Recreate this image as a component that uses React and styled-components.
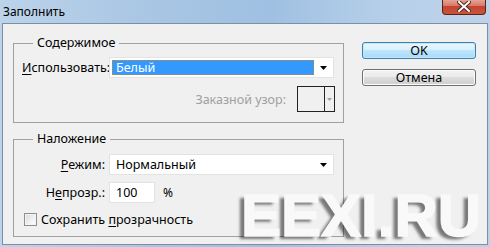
import styled, { createGlobalStyle } from "styled-components";

const Global = createGlobalStyle`
  html, body {
    margin: 0;
    padding: 0;
    background: #b9d0e8;
  }
  body {
    font-family: "Noto Sans", "Liberation Sans", sans-serif;
    font-size: 12px;
    color: #000;
  }
`;

const Window = styled.div`
  position: relative;
  width: 490px;
  height: 247px;
  box-sizing: border-box;
  padding: 0 2px 2px 2px;
  display: flex;
  flex-direction: column;
  overflow: hidden;
  background: linear-gradient(90deg, #bcd3ea 0%, #a9c6e4 30%, #9fc0e2 55%, #b7d0ea 80%, #bdd2e8 100%);
`;

const TitleBar = styled.div`
  height: 23px;
  display: flex;
  align-items: flex-start;
  justify-content: space-between;
`;

const Title = styled.div`
  padding: 4px 0 0 1px;
  font-family: "Noto Sans", sans-serif;
  font-size: 12px;
  line-height: 16px;
  color: #000;
`;

const CloseButton = styled.div`
  width: 44px;
  height: 16px;
  margin: -1px 2px 0 0;
  box-sizing: border-box;
  border: 1px solid #5e2016;
  border-top: none;
  border-radius: 0 0 4px 4px;
  background: linear-gradient(180deg, #e6a99b 0%, #d87a66 45%, #c24530 50%, #c9543c 100%);
  display: flex;
  align-items: center;
  justify-content: center;
`;

const Client = styled.div`
  flex: 1;
  border: 1px solid #7d8fa3;
  background: #f0f0f0;
  display: flex;
  padding: 0 0 0 10px;
`;

const LeftColumn = styled.div`
  width: 331px;
  display: flex;
  flex-direction: column;
  padding-top: 19px;
`;

const GroupBox = styled.div`
  border: 1px solid #a0a0a0;
  margin-top: ${(p) => p.$gap || 0}px;
  padding: 0 8px ${(p) => p.$bottom || 0}px 8px;
  display: flex;
  flex-direction: column;
`;

const GroupTitle = styled.div`
  margin: -9px 0 0 11px;
  padding: 0 4px;
  width: fit-content;
  background: #f0f0f0;
  line-height: 16px;
  font-size: 12.5px;
`;

const FormGrid = styled.div`
  display: grid;
  grid-template-columns: 83px 225px;
  column-gap: 4px;
  row-gap: 7px;
  align-items: center;
  margin-top: ${(p) => p.$top || 0}px;
`;

const Label = styled.label`
  text-align: ${(p) => p.$align || "right"};
  white-space: nowrap;
  color: ${(p) => (p.$disabled ? "#a0a0a0" : "#000")};
  font-size: 12.5px;
`;

const Hot = styled.span`
  text-decoration: underline;
  text-underline-offset: 2px;
`;

const Combo = styled.div`
  height: 21px;
  box-sizing: border-box;
  border: 1px solid #e3e3e3;
  background: #fff;
  display: flex;
  align-items: center;
  padding: 2px 0 2px 2px;
`;

const ComboValue = styled.div`
  flex: 1;
  height: 100%;
  box-sizing: border-box;
  display: flex;
  align-items: center;
  padding-left: 4px;
  font-size: 12.5px;
  ${(p) =>
    p.$selected
      ? `
    background: #3399ff;
    color: #fff;
    outline: 1px dotted #c98a2a;
    outline-offset: -1px;
  `
      : `color: #000;`}
`;

const ArrowBox = styled.div`
  width: 19px;
  display: flex;
  align-items: center;
  justify-content: center;
`;

const PatternRow = styled.div`
  display: flex;
  justify-content: flex-end;
  align-items: center;
  gap: 11px;
  margin-top: 8px;
`;

const PatternBox = styled.div`
  width: 38px;
  height: 26px;
  box-sizing: border-box;
  border: 1px solid #222;
  display: flex;
  background: #f0f0f0;
`;

const PatternPreview = styled.div`
  width: 26px;
  border-right: 1px solid #222;
`;

const PatternArrow = styled.div`
  flex: 1;
  display: flex;
  align-items: center;
  justify-content: center;
`;

const InputRow = styled.div`
  display: flex;
  align-items: center;
  gap: 8px;
`;

const NumberInput = styled.div`
  width: 46px;
  height: 21px;
  box-sizing: border-box;
  border: 1px solid #e3e3e3;
  background: #fff;
  display: flex;
  align-items: center;
  padding-left: 6px;
  font-size: 12.5px;
`;

const CheckRow = styled.div`
  display: flex;
  align-items: center;
  gap: 4px;
  margin-top: 8px;
  padding-left: 2px;
  height: 16px;
`;

const CheckBox = styled.div`
  width: 13px;
  height: 13px;
  box-sizing: border-box;
  border: 1px solid #8e8f8f;
  background: linear-gradient(135deg, #d8d8d8 0%, #f2f2f2 60%, #ffffff 100%);
  box-shadow: inset 0 0 0 1px #f4f4f4;
`;

const RightColumn = styled.div`
  display: flex;
  flex-direction: column;
  gap: 10px;
  margin-left: 18px;
  padding-top: 18px;
`;

const Button = styled.div`
  width: 114px;
  height: 17px;
  box-sizing: border-box;
  border-radius: 3px;
  display: flex;
  align-items: center;
  justify-content: center;
  font-size: 12.5px;
  border: 1px solid ${(p) => (p.$primary ? "#3c7fb1" : "#707070")};
  background: ${(p) =>
    p.$primary
      ? "linear-gradient(180deg, #eaf6fd 0%, #d9f0fc 45%, #bee6fd 50%, #a7d9f5 100%)"
      : "linear-gradient(180deg, #f2f2f2 0%, #ebebeb 45%, #dddddd 50%, #cfcfcf 100%)"};
  box-shadow: inset 0 0 0 1px ${(p) => (p.$primary ? "#c4e6f8" : "#fcfcfc")};
`;

const Watermark = styled.div`
  position: absolute;
  left: 241px;
  top: 192px;
  font-family: "Liberation Sans", Arial, sans-serif;
  font-weight: bold;
  font-size: 60px;
  line-height: 48px;
  color: #f9f9f9;
  -webkit-text-stroke: 1.5px #f9f9f9;
  text-shadow: -5px 3px 3px rgba(0, 0, 0, 0.5);
  pointer-events: none;
  white-space: nowrap;
`;

const Triangle = ({ color = "#000" }) => (
  <svg width="7" height="4" viewBox="0 0 7 4">
    <path d="M0 0 H7 L3.5 4 Z" fill={color} />
  </svg>
);

export default function App() {
  return (
    <>
      <Global />
      <Window>
        <TitleBar>
          <Title>Заполнить</Title>
          <CloseButton>
            <svg width="14" height="11" viewBox="0 0 14 11">
              <path
                d="M2 1 L12 10 M12 1 L2 10"
                stroke="#4a2a26"
                strokeWidth="4"
                strokeLinecap="square"
              />
              <path
                d="M2 1 L12 10 M12 1 L2 10"
                stroke="#ffffff"
                strokeWidth="2"
                strokeLinecap="square"
              />
            </svg>
          </CloseButton>
        </TitleBar>
        <Client>
          <LeftColumn>
            <GroupBox $bottom={10}>
              <GroupTitle>Содержимое</GroupTitle>
              <FormGrid $top={6}>
                <Label $align="left">
                  <Hot>И</Hot>спользовать:
                </Label>
                <Combo>
                  <ComboValue $selected>Белый</ComboValue>
                  <ArrowBox>
                    <Triangle />
                  </ArrowBox>
                </Combo>
              </FormGrid>
              <PatternRow>
                <Label $disabled>Заказной узор:</Label>
                <PatternBox>
                  <PatternPreview />
                  <PatternArrow>
                    <svg width="5" height="3" viewBox="0 0 5 3">
                      <path d="M0 0 H5 L2.5 3 Z" fill="#a0a0a0" />
                    </svg>
                  </PatternArrow>
                </PatternBox>
              </PatternRow>
            </GroupBox>
            <GroupBox $gap={16} $bottom={9}>
              <GroupTitle>Наложение</GroupTitle>
              <FormGrid $top={7}>
                <Label>
                  <Hot>Р</Hot>ежим:
                </Label>
                <Combo>
                  <ComboValue>Нормальный</ComboValue>
                  <ArrowBox>
                    <Triangle />
                  </ArrowBox>
                </Combo>
                <Label>
                  Н<Hot>е</Hot>прозр.:
                </Label>
                <InputRow>
                  <NumberInput>100</NumberInput>
                  <span>%</span>
                </InputRow>
              </FormGrid>
              <CheckRow>
                <CheckBox />
                <Label $align="left">
                  Сохранить <Hot>п</Hot>розрачность
                </Label>
              </CheckRow>
            </GroupBox>
          </LeftColumn>
          <RightColumn>
            <Button $primary>OK</Button>
            <Button>Отмена</Button>
          </RightColumn>
        </Client>
        <Watermark>EEXI.RU</Watermark>
      </Window>
    </>
  );
}
